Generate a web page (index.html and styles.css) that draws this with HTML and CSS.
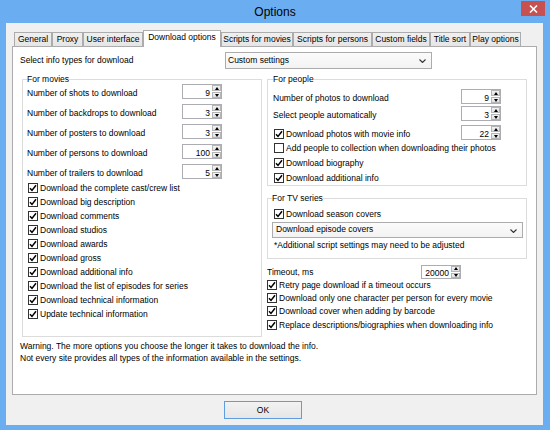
FILE: index.html
```html
<!DOCTYPE html>
<html>
<head>
<meta charset="utf-8">
<title>Options</title>
<link rel="stylesheet" href="styles.css">
</head>
<body>
<div class="window">
  <div class="titlebar">
    <span class="title">Options</span>
    <div class="close"><svg width="9" height="8" viewBox="0 0 9 8"><path d="M1 0.5 L8 7.5 M8 0.5 L1 7.5" stroke="#fff" stroke-width="1.6" fill="none"/></svg></div>
  </div>
  <div class="client">
    <div class="tabs">
      <div class="tab t1">General</div>
      <div class="tab t2">Proxy</div>
      <div class="tab t3">User interface</div>
      <div class="tab t4 active">Download options</div>
      <div class="tab t5">Scripts for movies</div>
      <div class="tab t6">Scripts for persons</div>
      <div class="tab t7">Custom fields</div>
      <div class="tab t8">Title sort</div>
      <div class="tab t9">Play options</div>
    </div>
    <div class="panel">
      <div class="toprow">
        <span class="toplabel">Select info types for download</span>
        <div class="combo combo-top"><span>Custom settings</span><svg class="chev" width="7" height="4" viewBox="0 0 7 4"><path d="M0.5 0.5 L3.5 3.5 L6.5 0.5" stroke="#333" stroke-width="1.1" fill="none"/></svg></div>
      </div>
      <div class="columns">
        <fieldset class="group movies">
          <legend>For movies</legend>
          <div class="spinrows">
            <div class="srow"><span class="slabel">Number of shots to download</span><div class="spin"><span class="val">9</span><span class="arrows"><span class="abtn up"></span><span class="abtn down"></span></span></div></div>
            <div class="srow"><span class="slabel">Number of backdrops to download</span><div class="spin"><span class="val">3</span><span class="arrows"><span class="abtn up"></span><span class="abtn down"></span></span></div></div>
            <div class="srow"><span class="slabel">Number of posters to download</span><div class="spin"><span class="val">3</span><span class="arrows"><span class="abtn up"></span><span class="abtn down"></span></span></div></div>
            <div class="srow"><span class="slabel">Number of persons to download</span><div class="spin"><span class="val">100</span><span class="arrows"><span class="abtn up"></span><span class="abtn down"></span></span></div></div>
            <div class="srow"><span class="slabel">Number of trailers to download</span><div class="spin"><span class="val">5</span><span class="arrows"><span class="abtn up"></span><span class="abtn down"></span></span></div></div>
          </div>
          <div class="checks mchecks">
            <div class="chk"><span class="box"><svg viewBox="0 0 8 8"><path d="M1 4.2 L3 6.4 L7 1.2" stroke="#000" stroke-width="1.5" fill="none"/></svg></span>Download the complete cast/crew list</div>
            <div class="chk"><span class="box"><svg viewBox="0 0 8 8"><path d="M1 4.2 L3 6.4 L7 1.2" stroke="#000" stroke-width="1.5" fill="none"/></svg></span>Download big description</div>
            <div class="chk"><span class="box"><svg viewBox="0 0 8 8"><path d="M1 4.2 L3 6.4 L7 1.2" stroke="#000" stroke-width="1.5" fill="none"/></svg></span>Download comments</div>
            <div class="chk"><span class="box"><svg viewBox="0 0 8 8"><path d="M1 4.2 L3 6.4 L7 1.2" stroke="#000" stroke-width="1.5" fill="none"/></svg></span>Download studios</div>
            <div class="chk"><span class="box"><svg viewBox="0 0 8 8"><path d="M1 4.2 L3 6.4 L7 1.2" stroke="#000" stroke-width="1.5" fill="none"/></svg></span>Download awards</div>
            <div class="chk"><span class="box"><svg viewBox="0 0 8 8"><path d="M1 4.2 L3 6.4 L7 1.2" stroke="#000" stroke-width="1.5" fill="none"/></svg></span>Download gross</div>
            <div class="chk"><span class="box"><svg viewBox="0 0 8 8"><path d="M1 4.2 L3 6.4 L7 1.2" stroke="#000" stroke-width="1.5" fill="none"/></svg></span>Download additional info</div>
            <div class="chk"><span class="box"><svg viewBox="0 0 8 8"><path d="M1 4.2 L3 6.4 L7 1.2" stroke="#000" stroke-width="1.5" fill="none"/></svg></span>Download the list of episodes for series</div>
            <div class="chk"><span class="box"><svg viewBox="0 0 8 8"><path d="M1 4.2 L3 6.4 L7 1.2" stroke="#000" stroke-width="1.5" fill="none"/></svg></span>Download technical information</div>
            <div class="chk"><span class="box"><svg viewBox="0 0 8 8"><path d="M1 4.2 L3 6.4 L7 1.2" stroke="#000" stroke-width="1.5" fill="none"/></svg></span>Update technical information</div>
          </div>
        </fieldset>
        <div class="rightcol">
          <fieldset class="group people">
            <legend>For people</legend>
            <div class="srow prow"><span class="slabel">Number of photos to download</span><div class="spin"><span class="val">9</span><span class="arrows"><span class="abtn up"></span><span class="abtn down"></span></span></div></div>
            <div class="srow prow second"><span class="slabel">Select people automatically</span><div class="spin"><span class="val">3</span><span class="arrows"><span class="abtn up"></span><span class="abtn down"></span></span></div></div>
            <div class="srow prow third"><span class="chk"><span class="box"><svg viewBox="0 0 8 8"><path d="M1 4.2 L3 6.4 L7 1.2" stroke="#000" stroke-width="1.5" fill="none"/></svg></span>Download photos with movie info</span><div class="spin"><span class="val">22</span><span class="arrows"><span class="abtn up"></span><span class="abtn down"></span></span></div></div>
            <div class="chk pchk"><span class="box"></span>Add people to collection when downloading their photos</div>
            <div class="chk pchk"><span class="box"><svg viewBox="0 0 8 8"><path d="M1 4.2 L3 6.4 L7 1.2" stroke="#000" stroke-width="1.5" fill="none"/></svg></span>Download biography</div>
            <div class="chk pchk"><span class="box"><svg viewBox="0 0 8 8"><path d="M1 4.2 L3 6.4 L7 1.2" stroke="#000" stroke-width="1.5" fill="none"/></svg></span>Download additional info</div>
          </fieldset>
          <fieldset class="group tv">
            <legend>For TV series</legend>
            <div class="chk tchk"><span class="box"><svg viewBox="0 0 8 8"><path d="M1 4.2 L3 6.4 L7 1.2" stroke="#000" stroke-width="1.5" fill="none"/></svg></span>Download season covers</div>
            <div class="combo combo-tv"><span>Download episode covers</span><svg class="chev" width="7" height="4" viewBox="0 0 7 4"><path d="M0.5 0.5 L3.5 3.5 L6.5 0.5" stroke="#333" stroke-width="1.1" fill="none"/></svg></div>
            <div class="note">*Additional script settings may need to be adjusted</div>
          </fieldset>
          <div class="timeout">
            <span class="tlabel">Timeout, ms</span>
            <div class="spin tspin"><span class="val">20000</span><span class="arrows"><span class="abtn up"></span><span class="abtn down"></span></span></div>
          </div>
          <div class="checks rchecks">
            <div class="chk"><span class="box"><svg viewBox="0 0 8 8"><path d="M1 4.2 L3 6.4 L7 1.2" stroke="#000" stroke-width="1.5" fill="none"/></svg></span>Retry page download if a timeout occurs</div>
            <div class="chk"><span class="box"><svg viewBox="0 0 8 8"><path d="M1 4.2 L3 6.4 L7 1.2" stroke="#000" stroke-width="1.5" fill="none"/></svg></span>Download only one character per person for every movie</div>
            <div class="chk"><span class="box"><svg viewBox="0 0 8 8"><path d="M1 4.2 L3 6.4 L7 1.2" stroke="#000" stroke-width="1.5" fill="none"/></svg></span>Download cover when adding by barcode</div>
            <div class="chk"><span class="box"><svg viewBox="0 0 8 8"><path d="M1 4.2 L3 6.4 L7 1.2" stroke="#000" stroke-width="1.5" fill="none"/></svg></span>Replace descriptions/biographies when downloading info</div>
          </div>
        </div>
      </div>
      <div class="warning">
        <div>Warning. The more options you choose the longer it takes to download the info.</div>
        <div>Not every site provides all types of the information available in the settings.</div>
      </div>
    </div>
    <div class="buttons"><button class="btn-ok" type="button">OK</button></div>
  </div>
</div>
</body>
</html>
```

FILE: styles.css
```css
* { box-sizing: border-box; }
html, body { margin: 0; padding: 0; }
body {
  width: 550px;
  height: 430px;
  overflow: hidden;
  font-family: "Liberation Sans", Arial, sans-serif;
  font-size: 8.5px;
  color: #000;
}
.window {
  width: 550px;
  height: 430px;
  background: #6aadf1;
  display: flex;
  flex-direction: column;
}
.titlebar {
  height: 23px;
  flex: none;
  display: grid;
  grid-template-columns: 1fr auto 1fr;
}
.title {
  grid-column: 2;
  font-size: 12px;
  line-height: 24px;
  color: #000;
}
.close {
  grid-column: 3;
  justify-self: end;
  align-self: start;
  width: 24px;
  height: 15px;
  margin: 1px 5px 0 0;
  background: #c75050;
  display: flex;
  align-items: center;
  justify-content: center;
}
.close svg { display: block; }
.client {
  flex: 1;
  margin: 0 7px 5px 6px;
  background: #f0f0f0;
  display: flex;
  flex-direction: column;
  padding-top: 7px;
}
.tabs {
  display: flex;
  align-items: flex-end;
  height: 16px;
  padding-left: 8px;
  flex: none;
}
.tab {
  flex: none;
  height: 14px;
  line-height: 12px;
  border: 1px solid #acacac;
  border-bottom: none;
  background: linear-gradient(#f0f0f0, #e5e5e5);
  text-align: center;
  white-space: nowrap;
}
.tab.active {
  height: 17px;
  line-height: 13px;
  background: #fff;
  margin-bottom: -1px;
  position: relative;
  z-index: 1;
}
.t1 { width: 38px; }
.t2 { width: 31px; }
.t3 { width: 60px; }
.t4 { width: 78px; }
.t5 { width: 72px; }
.t6 { width: 79px; }
.t7 { width: 58px; }
.t8 { width: 40px; }
.t9 { width: 51px; }
.panel {
  flex: 1;
  margin: 0 6px;
  background: #fff;
  border: 1px solid #acacac;
  padding: 4px 0 0 7px;
}
.toprow {
  display: grid;
  grid-template-columns: 205px 207px;
  align-items: center;
}
.toplabel { line-height: 17px; padding-top: 1px; }
.combo {
  display: flex;
  align-items: flex-start;
  justify-content: space-between;
  border: 1px solid #acacac;
  background: linear-gradient(#fbfbfb, #f3f3f3);
  padding: 0 5px 0 2px;
}
.combo-top { height: 17px; line-height: 15px; }
.combo-top .chev { margin-top: 6px; }
.combo-tv { height: 16px; line-height: 13px; margin: 1px 3px 0 0; padding-left: 3px; }
.combo-tv .chev { margin-top: 6px; }
.chev { flex: none; display: block; }
.columns {
  display: grid;
  grid-template-columns: 240px 260px;
  column-gap: 5px;
  margin: 5px 0 0 2px;
  align-items: start;
}
.group {
  margin: 0;
  border: 1px solid #dcdcdc;
  padding: 0 4px;
  min-width: 0;
}
.group legend {
  padding: 0;
  line-height: 10px;
}
.movies { padding-bottom: 15px; }
.spinrows {
  display: grid;
  row-gap: 5px;
}
.srow {
  display: grid;
  grid-template-columns: 1fr 40px;
  height: 15px;
  align-items: start;
}
.movies .srow { padding-right: 35px; }
.slabel { line-height: 15px; padding-top: 2px; white-space: nowrap; }
.spin {
  width: 40px;
  height: 15px;
  border: 1px solid #abadb3;
  background: #fff;
  display: flex;
}
.val {
  flex: 1;
  text-align: right;
  line-height: 10px;
  padding: 3px 1px 0 0;
}
.arrows {
  flex: none;
  width: 10px;
  display: flex;
  flex-direction: column;
  gap: 1px;
  padding: 0 0 0 1px;
}
.abtn {
  flex: 1;
  border: 1px solid #b5b5b5;
  background: linear-gradient(#f3f3f3, #e0e0e0);
  display: flex;
  align-items: center;
  justify-content: center;
}
.abtn::after {
  content: "";
  width: 0;
  height: 0;
  border-left: 2.5px solid transparent;
  border-right: 2.5px solid transparent;
}
.up::after { border-bottom: 3px solid #000; }
.down::after { border-top: 3px solid #000; }
.checks { display: grid; }
.mchecks { margin-top: 2px; }
.chk {
  display: flex;
  align-items: center;
  white-space: nowrap;
  height: 14px;
}
.box {
  flex: none;
  width: 10px;
  height: 10px;
  margin: 0 2px 0 1px;
  border: 1px solid #333;
  background: #fff;
  display: flex;
  align-items: center;
  justify-content: center;
}
.box svg { width: 8px; height: 8px; display: block; }
.people { padding: 5px 5px 0 5px; }
.people .srow { padding-right: 20px; }
.prow.second { margin-top: 2px; }
.prow.third { margin-top: 4px; }
.prow.third .chk { height: 15px; margin-top: 1px; }
.pchk { height: 15px; }
.tv { margin-top: 7px; padding: 3px 0 5px 4px; }
.tchk { height: 15px; margin-left: 1px; }
.note { line-height: 15px; padding-left: 2px; }
.timeout {
  display: grid;
  grid-template-columns: 154px 40px;
  height: 13px;
  margin-top: 6px;
  align-items: start;
}
.tlabel { line-height: 14px; padding-left: 0; }
.tspin { height: 14px; }
.tspin .val { padding-top: 2px; }
.rchecks .chk { height: 13.33px; }
.rchecks .box { margin-left: 0; }
.warning {
  margin-top: 3px;
  line-height: 12px;
}
.buttons {
  flex: none;
  height: 30px;
  padding: 6px 0 0 218px;
}
.btn-ok {
  display: block;
  width: 78px;
  height: 18px;
  margin: 0;
  padding: 0;
  border: 1px solid #5e9ee0;
  background: linear-gradient(#f2f2f2, #e6e6e6);
  font-family: "Liberation Sans", Arial, sans-serif;
  font-size: 8.5px;
  color: #000;
}
```
